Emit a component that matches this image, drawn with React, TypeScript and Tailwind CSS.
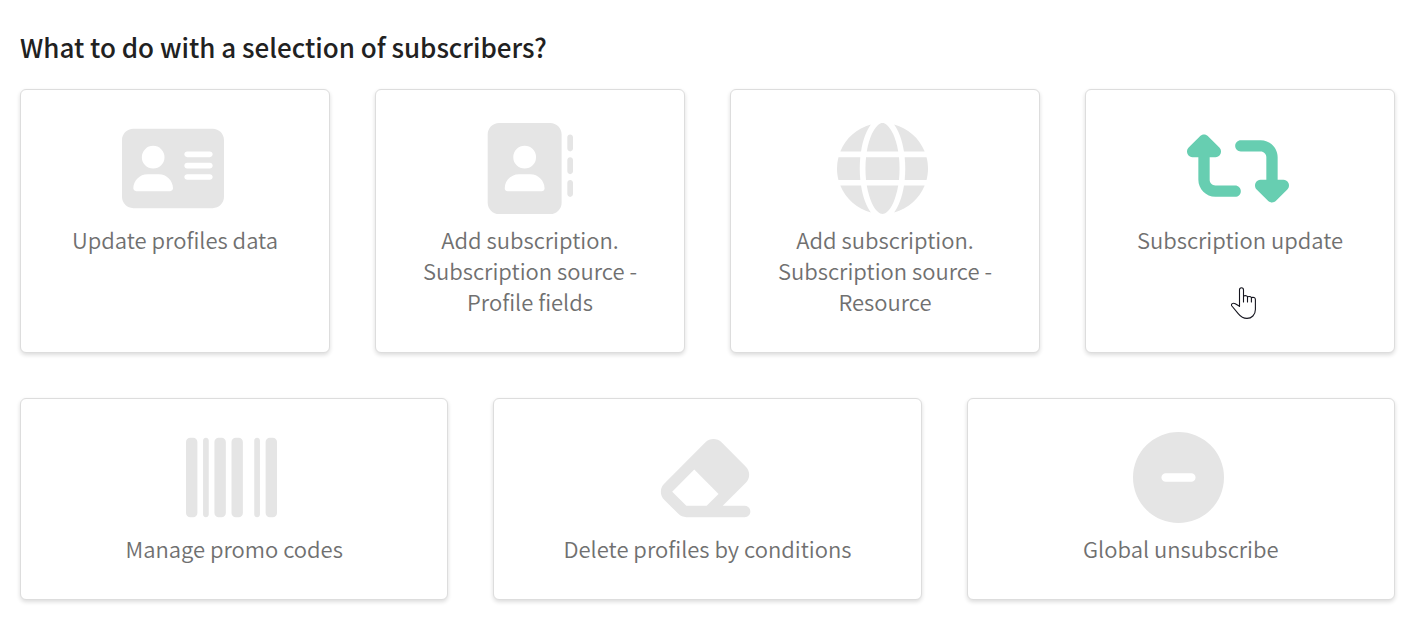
import type { IconType } from "react-icons";
import {
  FaAddressBook,
  FaAddressCard,
  FaBarcode,
  FaCircleMinus,
  FaEraser,
  FaGlobe,
  FaRetweet,
} from "react-icons/fa6";

type Action = {
  icon: IconType;
  lines: string[];
  wide?: boolean;
  active?: boolean;
};

const topRow: Action[] = [
  { icon: FaAddressCard, lines: ["Update profiles data"], wide: true },
  {
    icon: FaAddressBook,
    lines: ["Add subscription.", "Subscription source -", "Profile fields"],
  },
  {
    icon: FaGlobe,
    lines: ["Add subscription.", "Subscription source -", "Resource"],
  },
  { icon: FaRetweet, lines: ["Subscription update"], wide: true, active: true },
];

const bottomRow: Action[] = [
  { icon: FaBarcode, lines: ["Manage promo codes"] },
  { icon: FaEraser, lines: ["Delete profiles by conditions"], wide: true },
  { icon: FaCircleMinus, lines: ["Global unsubscribe"] },
];

function HandPointer() {
  return (
    <svg
      className="pointer-events-none absolute top-[197px] left-1/2 -ml-[9px]"
      width="26"
      height="33"
      viewBox="0 0 26 33"
      fill="white"
      stroke="#15151f"
      strokeWidth="1.1"
      strokeLinecap="round"
      strokeLinejoin="round"
      aria-hidden="true"
    >
      <path d="M8.5 19.5V3C8.5 0 12.5 0 12.5 3V9C14.5 8.2 16.1 8.8 16.5 9.8C18.3 9.2 19.9 9.7 20.4 10.6C22.4 10 24.4 10.6 24.4 12.4V22.5C24.4 28 20.5 31.4 16 31.4C12 31.4 9.6 29.6 7.2 26.6L.9 19C-.4 17 2 15.5 4.3 16.7L8.5 19.2" />
      <path d="M12.5 9V15M16.5 10V15M20.4 11V15" />
    </svg>
  );
}

function ActionCard({ icon: Icon, lines, wide, active }: Action) {
  return (
    <button
      type="button"
      className="relative flex cursor-pointer flex-col items-center justify-start rounded-md border border-[#dddddd] bg-white px-6 pt-[33px] pb-[35px] shadow-[0_2px_4px_rgba(0,0,0,0.14)]"
    >
      <Icon
        aria-hidden="true"
        className={`mr-[5px] h-[91px] ${wide ? "w-[102px]" : "w-[91px]"} ${
          active ? "text-[#67ceb1]" : "text-[#e5e5e5]"
        }`}
      />
      <span className="mt-[10px] text-[22px] leading-[31px] font-[350] text-[#707070]">
        {lines.map((line) => (
          <span key={line} className="block">
            {line}
          </span>
        ))}
      </span>
      {active && <HandPointer />}
    </button>
  );
}

export default function App() {
  return (
    <main className="bg-white pt-7 pr-[18px] pb-8 pl-5 font-['Noto_Sans_CJK_SC','Noto_Sans',sans-serif]">
      <h1 className="text-[26px] leading-[38px] font-medium text-[#212121]">
        What to do with a selection of subscribers?
      </h1>
      <div className="mt-[23px] grid grid-cols-4 gap-[45px]">
        {topRow.map((action) => (
          <ActionCard key={action.lines.join(" ")} {...action} />
        ))}
      </div>
      <div className="mt-[45px] grid grid-cols-3 gap-[45px]">
        {bottomRow.map((action) => (
          <ActionCard key={action.lines.join(" ")} {...action} />
        ))}
      </div>
    </main>
  );
}
